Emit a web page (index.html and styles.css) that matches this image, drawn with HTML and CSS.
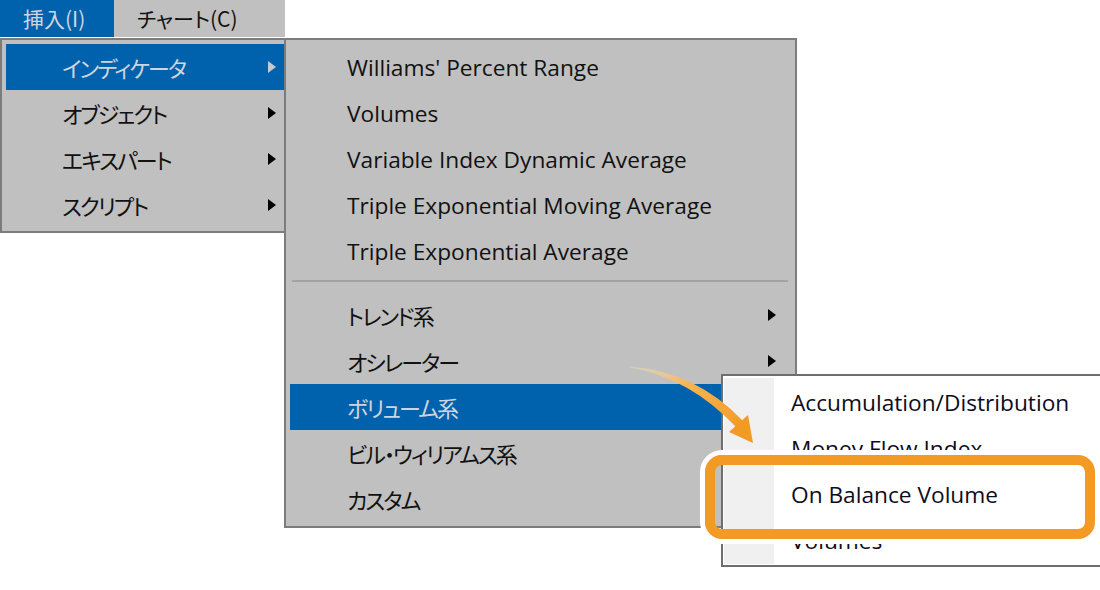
FILE: index.html
```html
<!DOCTYPE html>
<html lang="ja">
<head>
    <meta charset="UTF-8">
    <title>インディケータ メニュー</title>
    <link rel="stylesheet" href="styles.css">
</head>
<body>
    <div class="menubar">
        <div class="menubar-item active">挿入(I)</div>
        <div class="menubar-item">チャート(C)</div>
    </div>

    <!-- 挿入 menu -->
    <div class="menu menu-insert">
        <div class="item jp active">インディケータ<span class="sub"></span></div>
        <div class="item jp">オブジェクト<span class="sub"></span></div>
        <div class="item jp">エキスパート<span class="sub"></span></div>
        <div class="item jp">スクリプト<span class="sub"></span></div>
    </div>

    <!-- indicator submenu -->
    <div class="menu menu-indicators">
        <div class="item">Williams' Percent Range</div>
        <div class="item">Volumes</div>
        <div class="item">Variable Index Dynamic Average</div>
        <div class="item">Triple Exponential Moving Average</div>
        <div class="item">Triple Exponential Average</div>
        <div class="separator"></div>
        <div class="item jp">トレンド系<span class="sub"></span></div>
        <div class="item jp">オシレーター<span class="sub"></span></div>
        <div class="item jp active">ボリューム系<span class="sub"></span></div>
        <div class="item jp">ビル・ウィリアムス系<span class="sub"></span></div>
        <div class="item jp">カスタム</div>
    </div>

    <!-- volumes submenu -->
    <div class="popup menu-volumes">
        <div class="popup-list">
            <div class="popup-item">Accumulation/Distribution</div>
            <div class="popup-item">Money Flow Index</div>
            <div class="popup-item">On Balance Volume</div>
            <div class="popup-item">Volumes</div>
        </div>
    </div>

    <div class="callout"></div>

    <svg class="pointer" width="1100" height="590" viewBox="0 0 1100 590">
        <defs>
            <linearGradient id="fade" gradientUnits="userSpaceOnUse" x1="630" y1="366" x2="745" y2="430">
                <stop offset="0" stop-color="#fde7bf" stop-opacity="0.3"/>
                <stop offset="0.45" stop-color="#f7b552"/>
                <stop offset="1" stop-color="#f39a24"/>
            </linearGradient>
        </defs>
        <path d="M630,366.5 Q697,372 743,421 L736,427 Q690,378 630,367.5 Z" fill="url(#fade)"/>
        <path d="M729,432 L748,415 L753,443 Z" fill="#f39a24"/>
    </svg>
</body>
</html>
```

FILE: styles.css
```css
* {
    box-sizing: border-box;
}

body {
    margin: 0;
    background: #fff;
    position: relative;
    width: 1100px;
    height: 590px;
    overflow: hidden;
    font-family: 'Open Sans', 'Noto Sans CJK JP', sans-serif;
    font-size: 22.7px;
    color: #111;
}

.jp {
    font-family: 'Noto Sans CJK JP', sans-serif;
    font-size: 22px;
    font-feature-settings: "palt";
    letter-spacing: -1.9px;
}

/* top bar */
.menubar {
    display: flex;
    width: 285px;
    height: 37px;
    background: #c0c0c0;
    font-family: 'Noto Sans CJK JP', sans-serif;
    font-size: 21px;
    font-feature-settings: "palt";
}

.menubar-item {
    padding: 0 23px;
    line-height: 37px;
}

.menubar-item.active {
    width: 114px;
    background: #0062ad;
    color: #cfd5de;
}

/* classic gray menus */
.menu {
    position: absolute;
    top: 38px;
    background: #c0c0c0;
    border: 2px solid #7c7c7c;
}

.menu-insert {
    left: 0;
    width: 286px;
    padding: 4px 0 3px 4px;
}

.menu-indicators {
    left: 284px;
    width: 513px;
    padding: 4px;
}

.item {
    display: flex;
    align-items: center;
    height: 46px;
    padding-left: 57px;
}

.menu-insert .item {
    padding-left: 56px;
    padding-right: 8px;
}

.menu-indicators .item {
    padding-right: 15px;
}

.item.active {
    background: #0062ad;
    color: #cfd5de;
}

.sub {
    margin-left: auto;
    width: 0;
    height: 0;
    border-left: 8px solid #000;
    border-top: 6.5px solid transparent;
    border-bottom: 6.5px solid transparent;
}

.item.active .sub {
    border-left-color: #c4c8cf;
}

.separator {
    margin: 6px 3px 10px 2px;
    height: 2px;
    background: #a3a3a3;
}

/* modern white submenu */
.popup {
    position: absolute;
    left: 721px;
    top: 374px;
    width: 420px;
    background: #fff;
    border: 2px solid #6e6e6e;
    padding: 2px 0 1px 1px;
}

.popup-list {
    padding-top: 2px;
    background: linear-gradient(to right, #f0f0f0 50px, #fff 50px);
}

.popup-item {
    height: 46px;
    line-height: 46px;
    padding-left: 67px;
    color: #0d0d1a;
}

/* annotation */
.callout {
    position: absolute;
    left: 705px;
    top: 455px;
    width: 390px;
    height: 84px;
    border: 10px solid #f39a24;
    border-radius: 17px;
    box-shadow: 0 0 0 5px #fff;
}

.pointer {
    position: absolute;
    left: 0;
    top: 0;
    pointer-events: none;
}
```
